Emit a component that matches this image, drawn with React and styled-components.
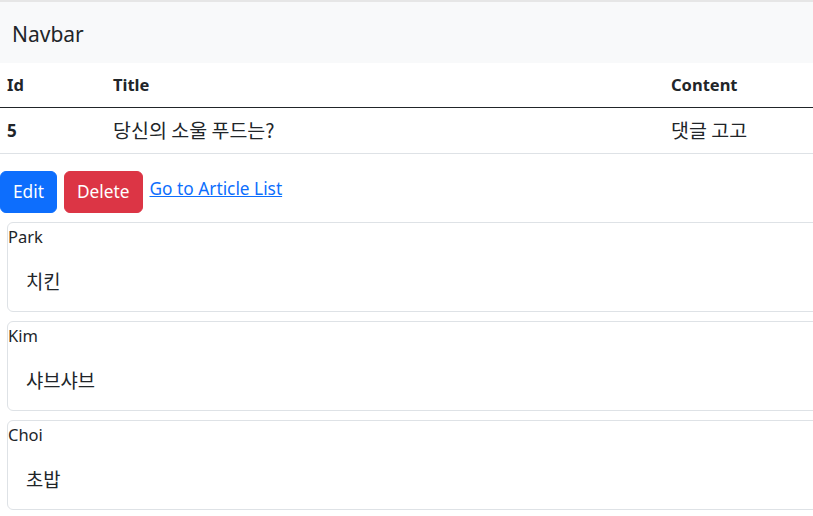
import React from 'react';
import styled, { createGlobalStyle } from 'styled-components';

const GlobalStyle = createGlobalStyle`
  html, body {
    margin: 0;
    padding: 0;
    overflow: hidden;
    background: #fff;
    font-family: "Noto Sans", "Noto Sans CJK KR", sans-serif;
    font-size: 17px;
    color: #212529;
  }
`;

const Page = styled.div`
  width: 840px;
  border-top: 2px solid #e6e6e6;
`;

const Navbar = styled.nav`
  background-color: #f8f9fa;
  padding: 17px 12px 14px;
  font-size: 21px;
  line-height: 30px;
  color: #212529;
`;

const Table = styled.table`
  width: 100%;
  table-layout: fixed;
  border-collapse: collapse;

  th, td {
    text-align: left;
    padding: 9px 8px 9px;
    height: 27px;
    line-height: 27px;
  }
  th {
    padding: 8px 8px 9px;
    font-size: 16.5px;
  }
  th:first-child, td:first-child {
    padding-left: 7px;
  }
  thead tr {
    border-bottom: 1px solid #212529;
  }
  tbody tr {
    border-bottom: 1px solid #dee2e6;
  }
`;

const Col = styled.col`
  width: ${({ $w }) => $w}px;
`;

const Korean = styled.span`
  font-family: "Noto Sans CJK KR", sans-serif;
  font-size: 19.5px;
  line-height: 1;
  vertical-align: -1px;
`;

const Actions = styled.div`
  display: flex;
  align-items: flex-start;
  gap: 7px;
  margin-top: 17px;
`;

const Button = styled.button`
  font-family: inherit;
  font-size: 17.3px;
  line-height: 28px;
  padding: 6px 12px;
  border: 1px solid ${({ $color }) => $color};
  background: ${({ $color }) => $color};
  color: #fff;
  border-radius: 6px;
`;

const Link = styled.a`
  color: #0d6efd;
  text-decoration: underline;
  font-size: 17.3px;
  line-height: 28px;
  margin-top: 4px;
`;

const CommentList = styled.div`
  display: flex;
  flex-direction: column;
  gap: 9px;
  margin: 9px 0 0 7px;
`;

const Card = styled.div`
  border: 1px solid #dee2e6;
  border-radius: 6px;
`;

const Author = styled.div`
  font-size: 16.5px;
  line-height: 27px;
  color: #212529;
`;

const Body = styled.div`
  padding: 17px 18px 17px;
  line-height: 27px;
  font-size: 18.8px;
  font-family: "Noto Sans CJK KR", sans-serif;
`;

const comments = [
  { author: 'Park', text: '치킨' },
  { author: 'Kim', text: '샤브샤브' },
  { author: 'Choi', text: '초밥' },
];

const App = () => (
  <Page>
    <GlobalStyle />
    <Navbar>Navbar</Navbar>
    <Table>
      <colgroup>
        <Col $w={105} />
        <Col $w={558} />
        <col />
      </colgroup>
      <thead>
        <tr>
          <th>Id</th>
          <th>Title</th>
          <th>Content</th>
        </tr>
      </thead>
      <tbody>
        <tr>
          <td><b>5</b></td>
          <td><Korean>당신의 소울 푸드는?</Korean></td>
          <td><Korean>댓글 고고</Korean></td>
        </tr>
      </tbody>
    </Table>
    <Actions>
      <Button $color="#0d6efd">Edit</Button>
      <Button $color="#dc3545">Delete</Button>
      <Link href="#">Go to Article List</Link>
    </Actions>
    <CommentList>
      {comments.map((c) => (
        <Card key={c.author}>
          <Author>{c.author}</Author>
          <Body>{c.text}</Body>
        </Card>
      ))}
    </CommentList>
  </Page>
);

export default App;
